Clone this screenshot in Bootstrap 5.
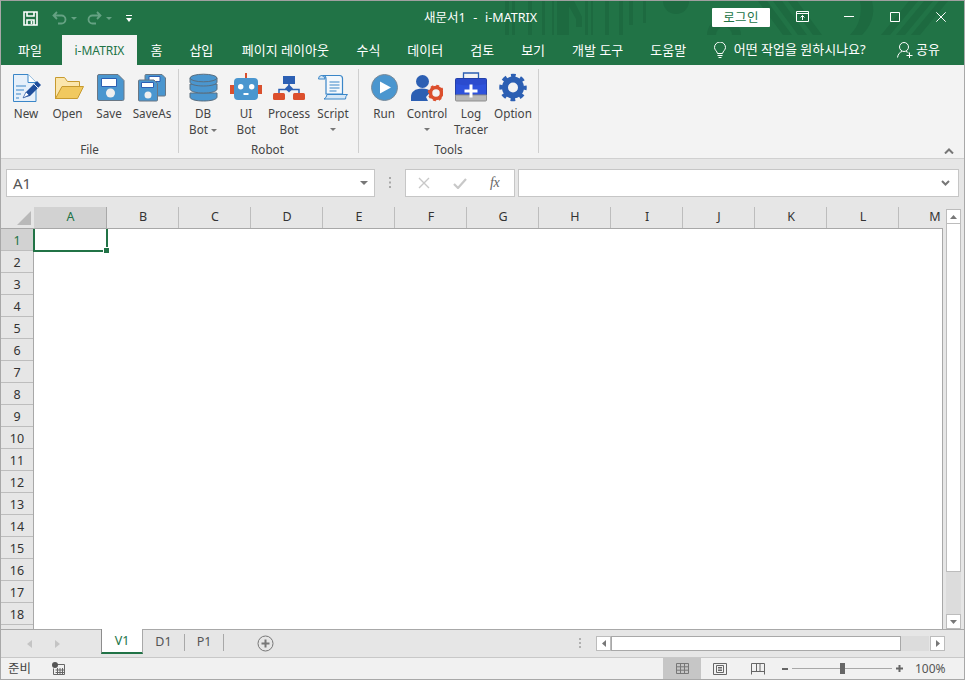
<!DOCTYPE html>
<html lang="ko">
<head>
<meta charset="utf-8">
<title>i-MATRIX</title>
<link href="https://cdn.jsdelivr.net/npm/bootstrap@5.3.0/dist/css/bootstrap.min.css" rel="stylesheet">
<style>
html,body{margin:0;padding:0;background:#fff;overflow:hidden}
body{font-family:"Noto Sans","Noto Sans CJK KR","Liberation Sans",sans-serif;font-size:12px;color:#333}
svg{display:block;flex:none}
.win{width:965px;height:680px;border:1px solid #a8a8a8;border-top-color:#a0a0a0;background:#e6e6e6}
.titlebar{height:34px;background:#217346;color:#fff}
.deco{position:absolute;left:0;top:0;width:963px;height:34px}
.titlebar>*:not(.deco){position:relative}
.ttl{margin-left:292px;font-size:12.5px;line-height:34px;width:118px;white-space:pre;word-spacing:.6px}
.login{width:58px;height:19px;margin-top:-2px;background:#fff;color:#217346;border-radius:1px;font-size:12.5px;line-height:19px;text-align:center;letter-spacing:.4px}
.ribtabs{height:30px;background:#217346;color:#fff;font-size:13px;padding-left:4px}
.rt{padding:0 13.5px;line-height:30px;white-space:nowrap}
.rt.first{padding:0 13px}
.rt.pg{padding:0 14px 0 15px}
.rt.on{background:#f3f3f3;color:#217346;padding:0;width:75px;text-align:center;font-size:12px;margin-left:7px;line-height:31px}
.ribbon{height:94px;background:#f3f3f3;border-bottom:1px solid #d0d0d0;padding-right:10px}
.grp{height:84px;margin-top:4px;border-right:1px solid #cfcfcf;flex:none}
.grp-in{height:72px;padding-top:3px;flex:none}
.grp-lab{line-height:16px;height:16px;flex:none;text-align:center;color:#444;font-size:11.7px;margin-left:-4px}
.g1{width:178px;padding-left:4px}
.g2{width:180px;padding-left:2px}
.g3{width:180px;padding-left:4px}
.rb{line-height:16px;text-align:center;color:#444;flex:none;font-size:11.7px}
.rb svg{margin-bottom:.5px}
.w40{width:40px}.w41{width:41px}.w42{width:42px}.w44{width:44px}
.car{display:inline-block;width:0;height:0;border:3px solid transparent;border-top:3px solid #777;border-bottom:0;vertical-align:2px}
.carline{height:16px;line-height:14px}
.fbar{height:48px;padding-top:10px}
.box{height:28px;background:#fff;border:1px solid #c6c6c6}
.nbox{width:369px;margin-left:5px;padding:0 6px;font-size:15px;color:#555;line-height:26px}
.fxbox{width:110px;margin-left:30px}
.fx{margin-left:23px;font-family:"Liberation Serif",serif;font-size:14px;font-style:italic;color:#666;line-height:1;letter-spacing:-.5px}
.inp{width:441px;margin-left:3px;padding-right:4px}
.gridwrap{height:422px}
.sheet{width:942px}
.chead{height:22px;border-bottom:1px solid #a8a8a8;overflow:hidden}
.corner{width:33px;flex:none;padding:4px 0 0 16px}
.ch{width:72px;flex:none;height:21px;border-right:1px solid #bdbdbd;text-align:center;line-height:20px;font-size:12.5px;color:#333;padding-left:1px}
.ch.sel{width:73px;background:#d2d2d2;border-right-color:#a8a8a8;color:#217346}
.sbody{height:400px;border-right:1px solid #a8a8a8;position:relative;overflow:hidden}
.rhead{width:33px;flex:none;overflow:hidden;height:400px;border-right:1px solid #a8a8a8}
.rh{height:22px;flex:none;border-bottom:1px solid #bdbdbd;text-align:center;line-height:23px;font-size:12.5px;color:#333}
.rh.sel{background:#d2d2d2;color:#217346}
.cells{background:#fff}
.cursor{position:absolute;left:32px;top:-2px;width:75px;height:25px;border:2px solid #217346}
.cursor i{position:absolute;right:-4px;bottom:-4px;background:#217346;border:1px solid #fff;box-sizing:content-box;width:5px;height:5px}
.vs{width:21px;padding:2px 0 0 3px}
.sbtn{width:15px;height:15px;background:#fff;border:1px solid #bcbcbc;flex:none}
.vthumb{width:15px;height:348px;background:#fff;border:1px solid #bcbcbc;border-top:0}
.vtrack{width:15px;height:42px;background:#dcdcdc}
.tabs{height:29px;border-top:1px solid #a8a8a8;border-bottom:1px solid #c8c8c8;background:#e6e6e6}
.navs{width:100px;padding:0 0 0 26px;gap:20px}
.t1{width:42px;height:25px;margin-top:-1px;background:#fff;border:1px solid #a8a8a8;border-top:0;border-bottom:2px solid #217346;border-left-color:#8d8d8d;text-align:center;line-height:24px;color:#217346;font-size:12.5px;flex:none}
.t2{height:17px;margin-top:4px;border-right:1px solid #a8a8a8;text-align:center;line-height:16px;font-size:12.5px;color:#555;flex:none}
.t-d{width:42px}.t-p{width:39px}
.plus{margin:5px 0 0 33px}
.hdots{margin:8px 0 0 305px}
.hleft{margin:6px 0 0 15px}
.hthumb{width:290px;height:15px;margin-top:6px;background:#fff;border:1px solid #a8a8a8;flex:none}
.htrack{width:28px;height:15px;margin-top:6px;background:#dcdcdc;flex:none}
.hright{margin-top:6px;margin-left:1px}
.status{height:21px;background:#f1f1f1;font-size:12px;color:#444}
.ready{margin-left:7px;width:44px;font-size:12.5px;line-height:21px}
.vact{width:38px;height:21px;background:#c6c6c6;margin-left:auto}
.vbtn{width:38px;height:21px}
.zoombox{margin-left:5px}
.zoomtxt{margin-left:12px;width:49px;color:#555;font-size:12px}
.ml4{margin-left:4px}.ml3{margin-left:3px}
.q1{margin-left:22px}.q2{margin-left:14px}.q3{margin-left:4px}.q4{margin-left:10px}
.w1{margin:-3px 0 0 26px}.w2{margin:-3px 0 0 35px}.w3{margin:-3px 0 0 36px}.w4{margin:-3px 18px 0 36px}
.hint{margin-left:14px}
.share{padding-right:24px}
.chev{margin-bottom:4px}
.dots{margin:8px -16px 0 14px}
.x1{margin-left:12px}.x2{margin-left:23px}
</style>
</head>
<body>
<div class="win d-flex flex-column overflow-hidden">

  <header class="titlebar d-flex align-items-center position-relative">
    <svg class="deco" viewBox="0 0 963 34" fill="#1d6a40">
      <path d="M504 0h4v34h-4zM511 0h3v34h-3zM527 0h4v34h-4zM541 0h3v34h-3zM551 0h2v34h-2zM556 0h12v34h-12zM584 0h3v34h-3zM590 0h2v34h-2zM604 0h4v34h-4zM618 0h4v34h-4zM628 0h4v24h-4z"/>
      <path d="M565 0h8l8 16v10h-6V18z" />
      <circle cx="675" cy="0" r="13"/>
      <path d="M642 0h3v22h-3z"/>
      <path d="M706 34a17 17 0 0 1 34 0h-9a8 8 0 0 0-16 0z"/>
      <path d="M757 0h9l25 34h-9zM772 0h9l25 34h-9zM787 0h9l25 34h-9z"/>
      <path d="M859 0h12c4 14-2 26-10 34h-12c8-8 13-20 10-34z"/>
      <path d="M880 34l28-34h9l-28 34zM895 34l28-34h9l-28 34zM910 34l28-34h9l-28 34z"/>
    </svg>
    <svg class="q1" width="15" height="15" viewBox="0 0 15 15" fill="none" stroke="#fff" stroke-width="1.6"><path d="M1 1h13v13H1z"/><path d="M4 1v4h7V1M4 14V9h7v5"/><path d="M8.500 10v3" /></svg>
    <svg class="q2" width="15" height="14" viewBox="0 0 15 14" fill="none" stroke="#65a283" stroke-width="1.8"><path d="M5 1L1.500 4.500 5 8M2 4.500h7.500a4 4 0 0 1 0 8H6"/></svg>
    <svg class="q3" width="6" height="3" viewBox="0 0 6 3" fill="#65a283"><path d="M0 0h6L3 3z"/></svg>
    <svg class="q4" width="15" height="14" viewBox="0 0 15 14" fill="none" stroke="#65a283" stroke-width="1.8"><path d="M10 1l3.500 3.500L10 8M13 4.500H5.500a4 4 0 0 0 0 8H9"/></svg>
    <svg class="q3" width="6" height="3" viewBox="0 0 6 3" fill="#65a283"><path d="M0 0h6L3 3z"/></svg>
    <svg class="q2" width="6" height="7" viewBox="0 0 6 7" fill="#fff"><path d="M0 0h6v1H0zM0 3h6L3 7z"/></svg>
    <div class="ttl">새문서1  -  i-MATRIX</div>
    <div class="login ms-auto">로그인</div>
    <svg class="w1" width="13" height="11" viewBox="0 0 13 11" fill="none" stroke="#fff"><path d="M.5.5h12v10H.5zM.5 2.500h12M6.500 9V4.500M4.500 6.500l2-2 2 2"/></svg>
    <svg class="w2" width="10" height="1" viewBox="0 0 10 1" fill="#fff"><path d="M0 0h10v1H0z"/></svg>
    <svg class="w3" width="10" height="10" viewBox="0 0 10 10" fill="none" stroke="#fff"><path d="M.5.5h9v9h-9z"/></svg>
    <svg class="w4" width="10" height="10" viewBox="0 0 10 10" fill="none" stroke="#fff"><path d="M.3.3l9.400 9.400M9.700.3L.3 9.700"/></svg>
  </header>

  <nav class="ribtabs d-flex align-items-stretch">
    <div class="rt first">파일</div>
    <div class="rt on">i-MATRIX</div>
    <div class="rt">홈</div>
    <div class="rt">삽입</div>
    <div class="rt pg">페이지 레이아웃</div>
    <div class="rt">수식</div>
    <div class="rt">데이터</div>
    <div class="rt">검토</div>
    <div class="rt">보기</div>
    <div class="rt">개발 도구</div>
    <div class="rt">도움말</div>
    <div class="hint d-flex align-items-center">
      <svg class="me-2" width="12" height="17" viewBox="0 0 12 17" fill="none" stroke="#fff"><path d="M3.500 11.500C3 9 .5 8 .5 5.500a5.500 5.500 0 0 1 11 0C11.500 8 9 9 8.500 11.500zM3.500 13.500h5M4.500 15.500h3"/></svg>
      <span>어떤 작업을 원하시나요?</span>
    </div>
    <div class="share d-flex align-items-center ms-auto">
      <svg width="16" height="16" viewBox="0 0 16 16" fill="none" stroke="#fff"><circle cx="7" cy="5" r="4.500"/><path d="M.5 15.500C1 12 3 10 5 9.500M9 9.500c1 .2 2 .8 2.500 1.500M9.500 13.500h6M12.500 10.500v5.500"/></svg>
      <span class="ml3">공유</span>
    </div>
  </nav>

  <section class="ribbon d-flex">
    <div class="grp g1 d-flex flex-column">
      <div class="grp-in d-flex">
        <div class="rb w42 d-flex flex-column align-items-center">
          <svg width="32" height="32" viewBox="0 0 32 32"><path d="M3.500 2.500H18L26 10.500V29.500H3.500z" fill="#e6f0fa" stroke="#3a86c8"/><path d="M18 2.500v8h8" fill="#fff" stroke="#3a86c8"/><path d="M6 14h10M6 18h8M6 22h5M6 26h3" stroke="#3a86c8" fill="none"/><path d="M13 26l3-6 11-11 4 4-11 11z" fill="#1f4e9c"/><path d="M13 26l3-6 3 3z" fill="#fff" stroke="#1f4e9c" stroke-width=".6"/><path d="M24 12l4 4" stroke="#e6f0fa"/></svg>
          <span>New</span>
        </div>
        <div class="rb w41 d-flex flex-column align-items-center">
          <svg width="32" height="32" viewBox="0 0 32 32"><path d="M3.500 27V5.500h9l3 4h12v5" fill="#fbe6ac" stroke="#c79a2f"/><path d="M10 14.500h21.500L25.500 26.500H3.500z" fill="#f1c95f" stroke="#c79a2f"/></svg>
          <span>Open</span>
        </div>
        <div class="rb w42 d-flex flex-column align-items-center">
          <svg width="32" height="32" viewBox="0 0 32 32"><path d="M4.500 4q0-1.500 1.500-1.500h19L31 8.500V27q0 1.500-1.500 1.500H6q-1.500 0-1.500-1.500z" fill="#4a96cf" stroke="#6a7784"/><path d="M8.500 6.500h15v8h-15z" fill="#fff" stroke="#2c5fb3"/><circle cx="17.500" cy="21" r="4.500" fill="#efefef"/></svg>
          <span>Save</span>
        </div>
        <div class="rb w44 d-flex flex-column align-items-center">
          <svg width="32" height="32" viewBox="0 0 32 32"><path d="M9 3.500q0-1 1-1h16l3.500 3.500V23q0 1-1 1H10q-1 0-1-1z" fill="#4a96cf" stroke="#6a7784"/><path d="M13 4.500h11v5H13z" fill="#fff" stroke="#2c5fb3"/><path d="M2.500 9q0-1 1-1h14.500l3.500 3.500V28q0 1-1 1h-17q-1 0-1-1z" fill="#4a96cf" stroke="#6a7784"/><path d="M5.500 10.500h12v5h-12z" fill="#fff" stroke="#2c5fb3"/><circle cx="12" cy="23" r="3.500" fill="#efefef"/></svg>
          <span>SaveAs</span>
        </div>
      </div>
      <div class="grp-lab">File</div>
    </div>

    <div class="grp g2 d-flex flex-column">
      <div class="grp-in d-flex">
        <div class="rb w44 d-flex flex-column align-items-center">
          <svg width="32" height="32" viewBox="0 0 32 32"><g fill="#4a96cf" stroke="#5a6e7f"><path d="M3 21v4c0 2.500 6 4 13.500 4S30 27.500 30 25v-4z"/><path d="M3 12v5c0 2.500 6 4 13.500 4S30 19.500 30 17v-5z"/><path d="M3 6v4c0 2.500 6 4 13.500 4S30 12.500 30 10V6z"/><ellipse cx="16.500" cy="6" rx="13.500" ry="3.800"/></g></svg>
          <span>DB</span>
          <span>Bot <i class="car"></i></span>
        </div>
        <div class="rb w42 d-flex flex-column align-items-center">
          <svg width="32" height="32" viewBox="0 0 32 32"><path d="M15 1h2v5h-2z" fill="#d9502e"/><path d="M0 13h4v9H0zM28 13h4v9h-4z" fill="#d9502e"/><rect x="4" y="6" width="24" height="22" rx="4" fill="#4a96cf"/><circle cx="10.700" cy="14.700" r="2.700" fill="#fff"/><circle cx="21.700" cy="14.700" r="2.700" fill="#fff"/><path d="M13.500 21h5v2h-5z" fill="#fff"/></svg>
          <span>UI</span>
          <span>Bot</span>
        </div>
        <div class="rb w44 d-flex flex-column align-items-center">
          <svg width="32" height="32" viewBox="0 0 32 32"><path d="M16 11v8M6 21v-3.500h20V21" fill="none" stroke="#2c5fb3" stroke-width="1.500"/><path d="M10 4h12v8H10z" fill="#2c5fb3"/><path d="M16 12.500l4 4-4 4-4-4z" fill="#2c5fb3"/><rect x="0" y="21" width="12" height="7" rx="1.500" fill="#dc4f2d"/><rect x="20" y="21" width="12" height="7" rx="1.500" fill="#dc4f2d"/></svg>
          <span>Process</span>
          <span>Bot</span>
        </div>
        <div class="rb w44 d-flex flex-column align-items-center">
          <svg width="32" height="32" viewBox="0 0 32 32"><path d="M4 3.500h18.500q3 0 3 3V22H9V7q0-3.500-3-3.500z" fill="#f4f8fc" stroke="#3a86c8" stroke-width="1.200"/><path d="M1.500 7q0-3.500 3-3.500T8 7H1.500z" fill="#d6e7f6" stroke="#3a86c8"/><path d="M12.500 10h10M12.500 13h10M12.500 16h10M12.500 19h7" stroke="#3a86c8" fill="none"/><path d="M10 22.500h20.500q-2 1.500-2 4.500H7q2.500-1 3-4.500z" fill="#d6e7f6" stroke="#3a86c8"/></svg>
          <span>Script</span>
          <span class="carline"><i class="car"></i></span>
        </div>
      </div>
      <div class="grp-lab">Robot</div>
    </div>

    <div class="grp g3 d-flex flex-column">
      <div class="grp-in d-flex">
        <div class="rb w42 d-flex flex-column align-items-center">
          <svg width="32" height="32" viewBox="0 0 32 32"><circle cx="16.500" cy="15.500" r="13" fill="#4a96cf" stroke="#7a8a98"/><path d="M12 9.500l11 6-11 6z" fill="#fff"/></svg>
          <span>Run</span>
        </div>
        <div class="rb w44 d-flex flex-column align-items-center">
          <svg width="32" height="32" viewBox="0 0 32 32"><circle cx="11.500" cy="9.500" r="6.500" fill="#2c5fb3"/><path d="M0 29v-4c0-5 4-8.500 11-8.500 4 0 7 1 9 3L15 25l2 4z" fill="#2c5fb3"/><circle cx="25" cy="21" r="5.500" fill="none" stroke="#dc4f2d" stroke-width="3.500"/><circle cx="25" cy="21" r="7" fill="none" stroke="#dc4f2d" stroke-width="2.500" stroke-dasharray="2.750 2.750"/></svg>
          <span>Control</span>
          <span class="carline"><i class="car"></i></span>
        </div>
        <div class="rb w44 d-flex flex-column align-items-center">
          <svg width="32" height="32" viewBox="0 0 32 32"><path d="M8.500 7V1h15v6" fill="none" stroke="#2c5fb3" stroke-width="1.300"/><path d="M.5 7.500q0-1 1-1h29q1 0 1 1V23H.5z" fill="#2e52dc" stroke="#2340a8"/><path d="M1 7h30v5q-15 3-30 0z" fill="#2a48c4" opacity=".6"/><path d="M.5 23h31v5q0 1-1 1h-29q-1 0-1-1z" fill="#b8b8b8" stroke="#8f8f8f"/><path d="M14.500 12.500h3v5h5v3h-5v5h-3v-5h-5v-3h5z" fill="#fff"/></svg>
          <span>Log</span>
          <span>Tracer</span>
        </div>
        <div class="rb w40 d-flex flex-column align-items-center">
          <svg width="32" height="32" viewBox="0 0 32 32"><circle cx="16" cy="15.500" r="8" fill="none" stroke="#2c5fb3" stroke-width="6"/><circle cx="16" cy="15.500" r="12" fill="none" stroke="#2c5fb3" stroke-width="3.500" stroke-dasharray="4.710 4.710" stroke-dashoffset="2.350"/></svg>
          <span>Option</span>
        </div>
      </div>
      <div class="grp-lab">Tools</div>
    </div>

    <svg class="chev ms-auto align-self-end" width="10" height="6" viewBox="0 0 10 6" fill="none" stroke="#777" stroke-width="2"><path d="M1 5.500l4-4 4 4"/></svg>
  </section>

  <section class="fbar d-flex">
    <div class="box nbox d-flex align-items-center justify-content-between">
      <span>A1</span>
      <svg width="8" height="4" viewBox="0 0 8 4" fill="#777"><path d="M0 0h8L4 4z"/></svg>
    </div>
    <svg class="dots" width="2" height="11" viewBox="0 0 2 11" fill="#a8a8a8"><path d="M0 0h2v2H0zM0 4.500h2v2H0zM0 9h2v2H0z"/></svg>
    <div class="box fxbox d-flex align-items-center">
      <svg class="x1" width="12" height="12" viewBox="0 0 12 12" fill="none" stroke="#c8c8c8" stroke-width="1.400"><path d="M1 1l10 10M11 1L1 11"/></svg>
      <svg class="x2" width="14" height="11" viewBox="0 0 14 11" fill="none" stroke="#c8c8c8" stroke-width="2.200"><path d="M1 6l4 4 8-9"/></svg>
      <i class="fx">fx</i>
    </div>
    <div class="box inp d-flex align-items-center justify-content-end">
      <svg class="me-1" width="9" height="6" viewBox="0 0 9 6" fill="none" stroke="#777" stroke-width="2"><path d="M1 1l3.500 3.500L8 1"/></svg>
    </div>
  </section>

  <section class="gridwrap d-flex">
    <div class="sheet d-flex flex-column">
      <div class="chead d-flex">
        <div class="corner"><svg width="14" height="14" viewBox="0 0 14 14" fill="#b9b9b9"><path d="M14 0v14H0z"/></svg></div>
        <div class="ch sel">A</div><div class="ch">B</div><div class="ch">C</div><div class="ch">D</div><div class="ch">E</div><div class="ch">F</div><div class="ch">G</div><div class="ch">H</div><div class="ch">I</div><div class="ch">J</div><div class="ch">K</div><div class="ch">L</div><div class="ch">M</div>
      </div>
      <div class="sbody d-flex">
        <div class="rhead d-flex flex-column">
          <div class="rh sel">1</div><div class="rh">2</div><div class="rh">3</div><div class="rh">4</div><div class="rh">5</div><div class="rh">6</div><div class="rh">7</div><div class="rh">8</div><div class="rh">9</div><div class="rh">10</div><div class="rh">11</div><div class="rh">12</div><div class="rh">13</div><div class="rh">14</div><div class="rh">15</div><div class="rh">16</div><div class="rh">17</div><div class="rh">18</div><div class="rh"></div>
        </div>
        <div class="cells flex-grow-1"></div>
        <div class="cursor"><i></i></div>
      </div>
    </div>
    <div class="vs d-flex flex-column">
      <div class="sbtn d-flex align-items-center justify-content-center"><svg width="7" height="4" viewBox="0 0 7 4" fill="#777"><path d="M0 4h7L3.500 0z"/></svg></div>
      <div class="vthumb"></div>
      <div class="vtrack"></div>
      <div class="sbtn d-flex align-items-center justify-content-center"><svg width="7" height="4" viewBox="0 0 7 4" fill="#777"><path d="M0 0h7L3.500 4z"/></svg></div>
    </div>
  </section>

  <section class="tabs d-flex">
    <div class="navs d-flex align-items-center">
      <svg width="5" height="8" viewBox="0 0 5 8" fill="#c4c4c4"><path d="M5 0v8L0 4z"/></svg>
      <svg class="ml3" width="5" height="8" viewBox="0 0 5 8" fill="#c4c4c4"><path d="M0 0v8l5-4z"/></svg>
    </div>
    <div class="t1">V1</div>
    <div class="t2 t-d">D1</div>
    <div class="t2 t-p">P1</div>
    <svg class="plus" width="17" height="17" viewBox="0 0 17 17" fill="none" stroke="#777"><circle cx="8.500" cy="8.500" r="7.500"/><path d="M8.500 4.500v8M4.500 8.500h8" stroke-width="2"/></svg>
    <svg class="hdots" width="2" height="10" viewBox="0 0 2 10" fill="#b0b0b0"><path d="M0 0h2v2H0zM0 4h2v2H0zM0 8h2v2H0z"/></svg>
    <div class="sbtn hleft d-flex align-items-center justify-content-center"><svg width="4" height="7" viewBox="0 0 4 7" fill="#777"><path d="M4 0v7L0 3.500z"/></svg></div>
    <div class="hthumb"></div>
    <div class="htrack"></div>
    <div class="sbtn hright d-flex align-items-center justify-content-center"><svg width="4" height="7" viewBox="0 0 4 7" fill="#777"><path d="M0 0v7l4-3.500z"/></svg></div>
  </section>

  <footer class="status d-flex align-items-center">
    <div class="ready">준비</div>
    <svg width="13" height="13" viewBox="0 0 13 13"><path d="M5 2.500h7.500v10H1.500V6.500" fill="none" stroke="#666"/><path d="M3.500 8h9M3.500 10.500h9M5.500 6v6M8 6v6M10.500 6v6" stroke="#666" fill="none"/><circle cx="3" cy="3" r="3" fill="#555"/></svg>
    <div class="vact d-flex align-items-center justify-content-center"><svg width="13" height="11" viewBox="0 0 13 11" fill="none" stroke="#777"><path d="M.5.500h12v10H.5zM.5 3.800h12M.5 7.200h12M4.500.5v10M8.500.5v10"/></svg></div>
    <div class="vbtn d-flex align-items-center justify-content-center"><svg width="14" height="12" viewBox="0 0 14 12" fill="none" stroke="#666"><path d="M.5.500h13v11H.5zM3.500 2.500h7v7h-7zM5 4.500h4M5 6h4M5 7.500h4"/></svg></div>
    <div class="vbtn d-flex align-items-center justify-content-center"><svg width="14" height="12" viewBox="0 0 14 12" fill="none" stroke="#666"><path d="M.5 11.500V.5h13v11M.5 8.500h13M5.500.5v8M9 .5v8" /></svg></div>
    <div class="zoombox d-flex align-items-center">
      <svg width="6" height="2" viewBox="0 0 6 2" fill="#666"><path d="M0 0h6v2H0z"/></svg>
      <svg class="ml4" width="100" height="11" viewBox="0 0 100 11"><path d="M0 5h100v1H0z" fill="#a8a8a8"/><path d="M48 0h5v11h-5z" fill="#666"/></svg>
      <svg class="ml4" width="7" height="7" viewBox="0 0 7 7" fill="#666"><path d="M2.500 0h2v2.500H7v2H4.500V7h-2V4.500H0v-2h2.500z"/></svg>
    </div>
    <div class="zoomtxt">100%</div>
  </footer>
</div>
<script src="https://cdn.jsdelivr.net/npm/bootstrap@5.3.0/dist/js/bootstrap.bundle.min.js"></script>
</body>
</html>
